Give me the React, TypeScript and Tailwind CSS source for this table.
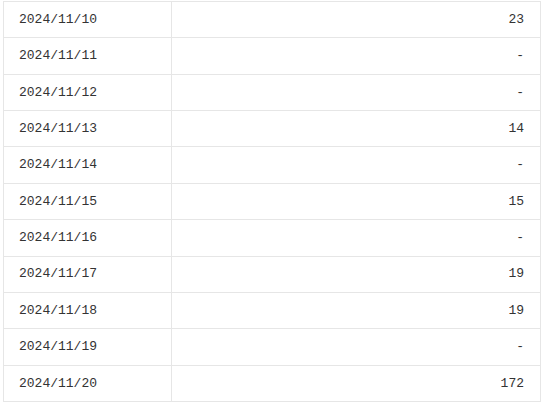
const rows: [string, string][] = [
  ['2024/11/10', '23'],
  ['2024/11/11', '-'],
  ['2024/11/12', '-'],
  ['2024/11/13', '14'],
  ['2024/11/14', '-'],
  ['2024/11/15', '15'],
  ['2024/11/16', '-'],
  ['2024/11/17', '19'],
  ['2024/11/18', '19'],
  ['2024/11/19', '-'],
  ['2024/11/20', '172'],
];

export default function App() {
  return (
    <div className="h-[406px] w-[542px] overflow-hidden bg-white pl-[3px] pt-[1px]">
      <div
        className="w-[538px] border-l border-r border-t border-[#e6e6e6] text-[13px] text-[#333]"
        style={{ fontFamily: '"Liberation Mono", "DejaVu Sans Mono", monospace' }}
      >
        {rows.map(([date, count]) => (
          <div
            key={date}
            className="grid h-[36.36px] grid-cols-[168px_1fr] border-b border-[#e6e6e6]"
          >
            <div className="flex items-center border-r border-[#e6e6e6] pl-[15px]">{date}</div>
            <div className="flex items-center justify-end pr-[16px]">{count}</div>
          </div>
        ))}
      </div>
    </div>
  );
}
